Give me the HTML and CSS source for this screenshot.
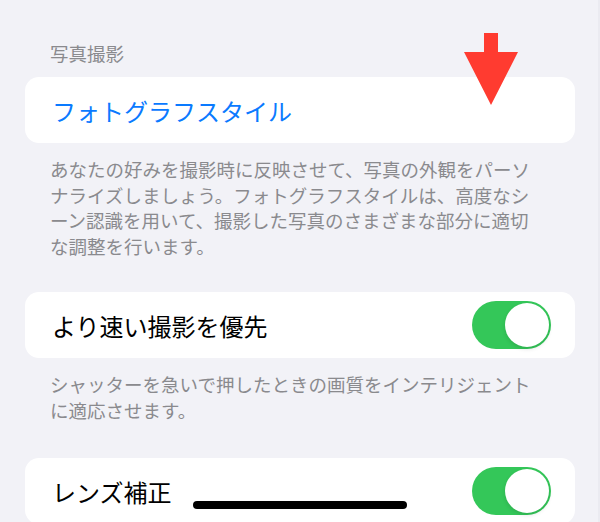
FILE: index.html
```html
<!DOCTYPE html>
<html lang="ja">
<head>
  <meta charset="UTF-8" />
  <meta name="viewport" content="width=device-width, initial-scale=1.0"/>
  <title>カメラ設定</title>
  <link rel="stylesheet" href="styles.css">
</head>
<body>
  <div class="screen">
    <section class="group">
      <h2 class="group-title">写真撮影</h2>
      <div class="card">
        <span class="link">フォトグラフスタイル</span>
      </div>
      <p class="note">あなたの好みを撮影時に反映させて、写真の外観をパーソ<br>ナライズしましょう。フォトグラフスタイルは、高度なシ<br>ーン認識を用いて、撮影した写真のさまざまな部分に適切<br>な調整を行います。</p>
    </section>

    <section class="group gap-md">
      <div class="card">
        <span class="label">より速い撮影を優先</span>
        <span class="toggle on"><span class="knob"></span></span>
      </div>
      <p class="note">シャッターを急いで押したときの画質をインテリジェント<br>に適応させます。</p>
    </section>

    <section class="group gap-lg">
      <div class="card">
        <span class="label">レンズ補正</span>
        <span class="toggle on"><span class="knob"></span></span>
      </div>
    </section>

    <!-- annotation arrow over the screenshot -->
    <svg class="arrow" width="54" height="72" viewBox="0 0 54 72">
      <polygon points="20,0 34,0 34,19 54,19 27,72 0,19 20,19" fill="#ff3b30"/>
    </svg>

    <div class="home-bar"></div>
  </div>
</body>
</html>
```

FILE: styles.css
```css
* {
  box-sizing: border-box;
}

body {
  margin: 0;
  background: #f2f2f7;
  font-family: 'Noto Sans CJK JP', 'Noto Sans', sans-serif;
  overflow: hidden;
}

.screen {
  position: relative;
  width: 600px;
  height: 522px;
  padding: 41px 23px 0 25px;
  border-right: 2px solid #ebebf1;
  overflow: hidden;
}

.group-title {
  margin: 0 0 11px;
  padding-left: 25px;
  font-size: 18.5px;
  font-weight: normal;
  line-height: 25px;
  color: #8a8a8e;
}

.card {
  display: flex;
  align-items: center;
  justify-content: space-between;
  height: 66px;
  padding: 0 24px 0 27px;
  background: #fff;
  border-radius: 14px;
}

.link {
  font-size: 24px;
  color: #0a7aff;
}

.label {
  font-size: 24px;
  color: #000;
}

.note {
  margin: 14px 0 0;
  padding-left: 25px;
  font-size: 18.5px;
  line-height: 25.5px;
  color: #8a8a8e;
}

.gap-md {
  margin-top: 33px;
}

.gap-lg {
  margin-top: 35px;
}

.toggle {
  position: relative;
  width: 79px;
  height: 48px;
  border-radius: 24px;
  background: #e9e9eb;
}

.toggle.on {
  background: #34c759;
}

.knob {
  position: absolute;
  top: 2px;
  right: 2px;
  width: 44px;
  height: 44px;
  border-radius: 50%;
  background: #fff;
  box-shadow: 0 2px 4px rgba(0, 0, 0, 0.12);
}

.arrow {
  position: absolute;
  left: 464px;
  top: 33px;
}

.home-bar {
  position: absolute;
  left: 193px;
  top: 501px;
  width: 214px;
  height: 8px;
  border-radius: 4px;
  background: #000;
}
```
